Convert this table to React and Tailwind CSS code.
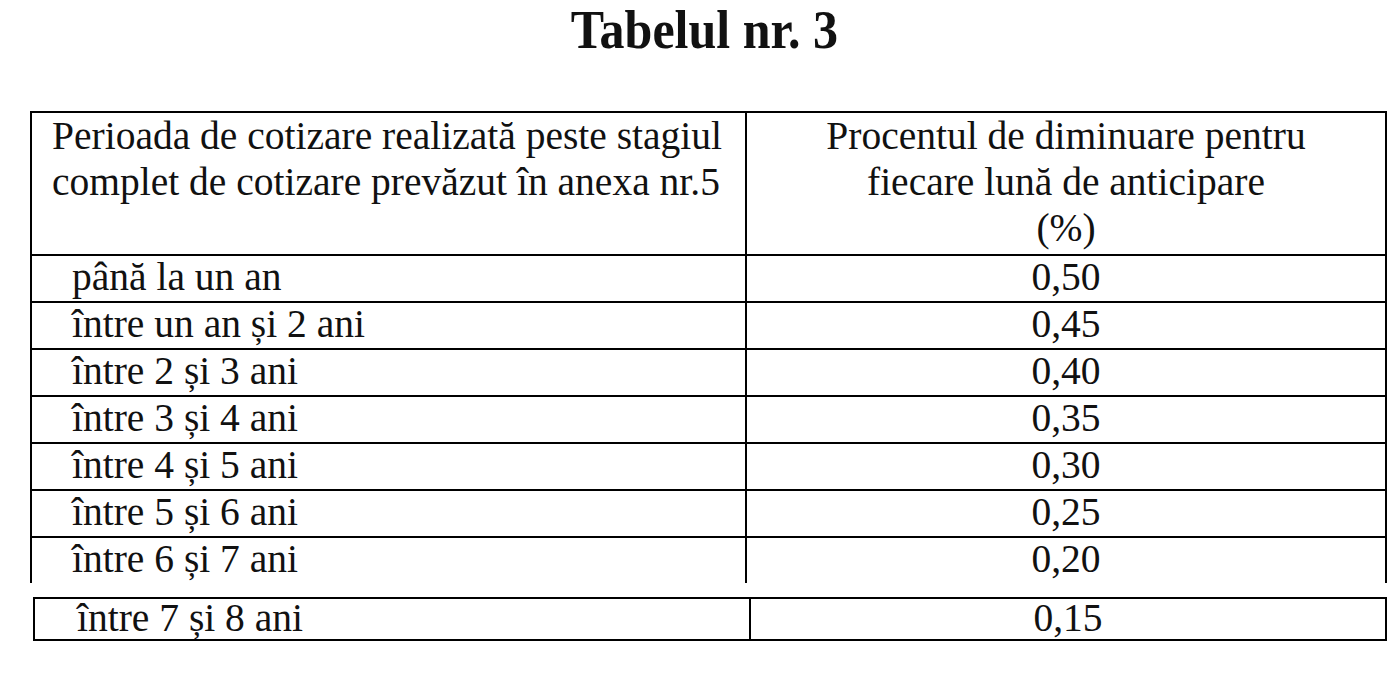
import React from "react";

const rows = [
  { label: "până la un an", value: "0,50" },
  { label: "între un an și 2 ani", value: "0,45" },
  { label: "între 2 și 3 ani", value: "0,40" },
  { label: "între 3 și 4 ani", value: "0,35" },
  { label: "între 4 și 5 ani", value: "0,30" },
  { label: "între 5 și 6 ani", value: "0,25" },
  { label: "între 6 și 7 ani", value: "0,20" },
];

const lastRow = { label: "între 7 și 8 ani", value: "0,15" };

const App = () => {
  return (
    <div
      className="w-[1400px] h-[680px] bg-white text-[#111] pl-[30px]"
      style={{ fontFamily: '"Liberation Serif", "Times New Roman", serif' }}
    >
      <div className="w-[1357px]">
        {/* Title */}
        <h1 className="text-center font-bold text-[50px] leading-[60px] h-[60px] pr-[8px]">
          <span className="inline-block scale-y-[1.08]">Tabelul nr. 3</span>
        </h1>

        {/* Table */}
        <div className="mt-[51px] border-2 border-b-0 border-black text-[39.5px] whitespace-nowrap">
          {/* Header */}
          <div className="flex h-[141px]">
            <div className="w-[715px] border-r-2 border-black pl-[20px] leading-[46px]">
              <div>Perioada de cotizare realizată peste stagiul</div>
              <div>complet de cotizare prevăzut în anexa nr.5</div>
            </div>
            <div className="flex-1 text-center leading-[46px]">
              <div>Procentul de diminuare pentru</div>
              <div>fiecare lună de anticipare</div>
              <div>(%)</div>
            </div>
          </div>

          {/* Rows */}
          {rows.map((row) => (
            <div
              key={row.label}
              className="flex h-[47px] border-t-2 border-black leading-[43px]"
            >
              <div className="w-[715px] border-r-2 border-black pl-[40px]">
                {row.label}
              </div>
              <div className="flex-1 text-center">{row.value}</div>
            </div>
          ))}
        </div>

        {/* Last row, printed as a separate strip */}
        <div className="mt-[14px] ml-[3px] flex h-[44px] border-2 border-black text-[39.5px] leading-[38px] whitespace-nowrap">
          <div className="w-[716px] border-r-2 border-black pl-[42px]">
            {lastRow.label}
          </div>
          <div className="flex-1 text-center">{lastRow.value}</div>
        </div>
      </div>
    </div>
  );
};

export default App;
